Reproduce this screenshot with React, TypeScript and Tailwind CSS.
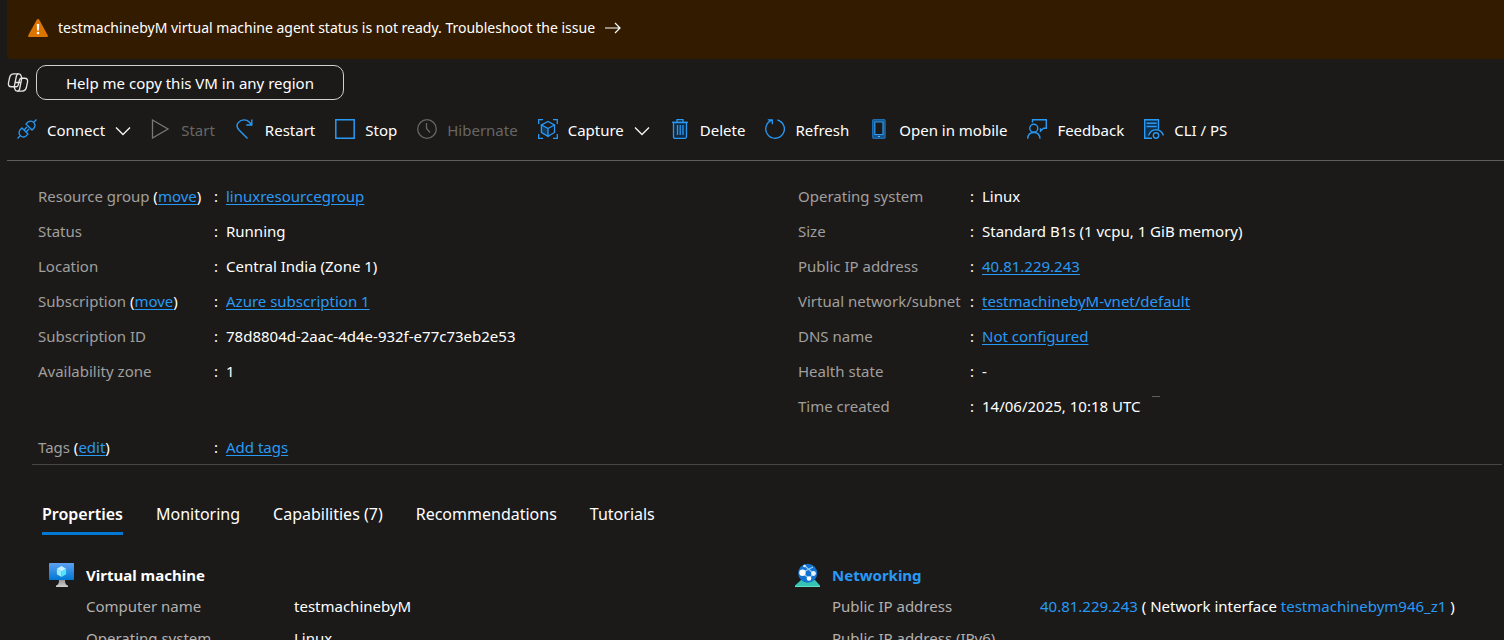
import type { ReactNode } from "react";

const svg = "size-5 shrink-0 fill-none stroke-[#2899f5]";

const ConnectIcon = () => (
  <svg viewBox="0 0 20 20" className={`${svg} -translate-y-px`} strokeWidth="1.3">
    <path d="M.5 19.500 3.500 16.500M16.500 3.500 19.500.5" />
    <path d="M5 9 11 15 9 17C7.200 18.400 5 18.200 3.400 16.600 1.800 15 1.700 13 3 11Z" />
    <path d="M9 5 15 11 17 9C18.300 7.200 18.200 5 16.600 3.400 15 1.800 13 1.700 11 3Z" />
    <path d="M7 11 10 8M9 13 12 10" />
  </svg>
);
const StartIcon = () => (
  <svg viewBox="0 0 20 20" className="size-5 shrink-0 -translate-y-px fill-none stroke-[#797775]" strokeWidth="1.3">
    <path d="M1.500 1 17 10 1.500 19Z" />
  </svg>
);
const RestartIcon = () => (
  <svg viewBox="0 0 20 20" className={`${svg} -translate-y-px`} strokeWidth="1.4">
    <path d="M12.500 19.500 3.800 10.800C1.800 8.500 1.700 5.300 3.700 3.100 6.500.1 11.500.1 14.200 3L16.500 5.700M16.800.5V6H11.300" />
  </svg>
);
const StopIcon = () => (
  <svg viewBox="0 0 20 20" className={`${svg} -translate-y-px`} strokeWidth="1.5">
    <path d="M.8.8H19.200V19.200H.8Z" />
  </svg>
);
const HibernateIcon = () => (
  <svg viewBox="0 0 20 20" className="size-5 shrink-0 -translate-y-px fill-none stroke-[#686664]" strokeWidth="1.3">
    <circle cx="10" cy="10" r="9.300" />
    <path d="M9.500 4V9.500L13 13.500" />
  </svg>
);
const CaptureIcon = () => (
  <svg viewBox="0 0 20 20" className={`${svg} -translate-y-px`} strokeWidth="1.3">
    <path d="M.7 5V.7H5M15 .7H19.300V5M19.300 15V19.300H15M5 19.300H.7V15" />
    <path d="M10 2.500 16.500 6V13.500L10 17.300 3.500 13.500V6Z" />
    <path d="M3.500 6 10 9.500V17.300L3.500 13.500Z" fill="#123a5a" />
    <path d="M10 9.500 16.500 6" />
  </svg>
);
const DeleteIcon = () => (
  <svg viewBox="0 0 20 20" className={`${svg} -translate-y-px`} strokeWidth="1.3">
    <path d="M3.200 3.500H16.500V17.800Q16.500 19.300 15 19.300H5Q3.500 19.300 3.500 17.800V3.500" fill="#102c44" />
    <path d="M2 3.300H18M7 3V.7H13V3M7.500 6V16M10.200 6V16M13 6V16" />
  </svg>
);
const RefreshIcon = () => (
  <svg viewBox="0 0 20 20" className={`${svg} -translate-y-px`} strokeWidth="1.3">
    <path d="M12.500 1A9.300 9.300 0 1 1 7 1.200M2.800.8H7.300V5.300" />
  </svg>
);
const MobileIcon = () => (
  <svg viewBox="0 0 20 20" className={`${svg} -translate-y-px`} strokeWidth="1.2">
    <rect x="3.600" y=".7" width="12.500" height="18.600" rx="1" fill="#1b5285" stroke="#1f6cae" />
    <path d="M5.800 3H14V15.500H5.800Z" fill="#1b1a19" />
    <path d="M9 17.500H11" stroke="#5bb8ff" />
  </svg>
);
const FeedbackIcon = () => (
  <svg viewBox="0 0 20 20" className={`${svg} -translate-y-px`} strokeWidth="1.4">
    <path d="M5.500 3.500V.7H19.300V9.300H16.500L13.500 12.200V9.300" />
    <circle cx="6.800" cy="9.300" r="4" />
    <path d="M.7 19.800C.8 15.800 3.200 13.500 6.800 13.500S12.800 15.800 13 19.800" />
  </svg>
);
const CliIcon = () => (
  <svg viewBox="0 0 20 20" className={`${svg} -translate-y-px`} strokeWidth="1.4">
    <path d="M.7.7H14.500V10.500C9 10.800 6 13 5 17L6 19.300H.7Z" fill="#0f3250" stroke="none" />
    <path d="M8 19.300H.7V.7H14.500V10M2.500 4.300H12.700M2.500 7.500H12.700" />
    <path d="M4.500 16.500C6 12.700 8.800 10.800 12 10.800S18 12.700 19.500 16.500" />
    <circle cx="12" cy="16.500" r="2.700" />
  </svg>
);
const Chevron = () => (
  <svg viewBox="0 0 16 10" className="h-[10px] w-4 shrink-0 translate-y-px fill-none stroke-[#f3f2f1]" strokeWidth="1.4">
    <path d="M1 1.500 8 8.500 15 1.500" />
  </svg>
);
const WarningIcon = () => (
  <svg viewBox="0 0 20 18" className="h-[18px] w-5 shrink-0">
    <path d="M10 0Q10.900 0 11.400.9L19.700 16.200Q20.500 17.900 18.700 18H1.300Q-.5 17.900.3 16.200L8.600.9Q9.100 0 10 0Z" fill="#db7500" />
    <path d="M8.800 5H11.200L10.900 11.500H9.100Z" fill="#fff" />
    <circle cx="10" cy="14" r="1.300" fill="#fff" />
  </svg>
);
const CopilotIcon = () => (
  <svg viewBox="0 0 22 20" className="h-[19px] w-[22px] shrink-0 fill-none stroke-[#e8e6e4]" strokeWidth="1.400" strokeLinejoin="round">
    <path d="M7 14.500H4C1.500 14.500 .5 13 1 10.500L2.200 4.700C2.800 2.300 4 1 6.500 1H12C13.500 1 14.100 1.800 14.400 3.200L14.900 5.500" />
    <path d="M15 5.500H18C20.500 5.500 21.500 7 21 9.500L19.800 15.300C19.200 17.700 18 19 15.500 19H10C8.500 19 7.900 18.200 7.600 16.800L7.100 14.500" />
    <path d="M11.500 1C10.200 1 9.700 1.800 9.300 3.200L7 14.500H9.300C10.500 14.500 11 13.800 11.300 12.500L12.500 7.500C12.900 6 13.500 5.500 15 5.500L12.700 16.800C12.300 18.200 11.800 19 10.500 19" />
    <path d="M8 10H12M10.200 10H14" />
  </svg>
);
const VmIcon = () => (
  <svg viewBox="0 0 26 24" className="h-6 w-[26px] shrink-0">
    <defs>
      <linearGradient id="screen" x1="0" y1="0" x2="0" y2="1">
        <stop offset="0" stopColor="#5ea0ef" />
        <stop offset="1" stopColor="#0078d4" />
      </linearGradient>
      <linearGradient id="stand" x1="0" y1="0" x2="0" y2="1">
        <stop offset="0" stopColor="#8f8f8f" />
        <stop offset="1" stopColor="#d0d0d0" />
      </linearGradient>
    </defs>
    <path d="M10 16H16C16 20 16.500 22 19 22.500V24H7V22.500C9.500 22 10 20 10 16Z" fill="url(#stand)" />
    <rect width="25" height="17" rx=".8" fill="url(#screen)" />
    <path d="M12.500 3 17.100 5.700 12.500 8.400 7.900 5.700Z" fill="#c3f1ff" />
    <path d="M7.900 5.700 12.500 8.400V14L7.900 11.300Z" fill="#9cebff" />
    <path d="M17.100 5.700V11.300L12.500 14V8.400Z" fill="#50e6ff" />
  </svg>
);
const NetworkIcon = () => (
  <svg viewBox="0 0 26 24" className="h-6 w-[26px] shrink-0">
    <path d="M6 17H20L25 22.500V24H0V22.500Z" fill="#37c2b1" />
    <path d="M0 23H25V24H0Z" fill="#5ee0cf" />
    <circle cx="12.700" cy="10.300" r="9.500" fill="#1173d0" />
    <path d="M9.500 2.700 18.500 10.500M7.500 9.500 18 4M7.500 10 14 15.500 18.500 10.500" stroke="#9fcdf5" strokeWidth="1.100" fill="none" />
    <circle cx="7.500" cy="9.700" r="3.200" fill="#fff" />
    <circle cx="18.500" cy="10.500" r="2.400" fill="#eaf5ff" />
    <circle cx="14" cy="15.500" r="2.300" fill="#fff" />
    <circle cx="9.500" cy="3" r="1.300" fill="#d6ebff" />
  </svg>
);

const commands: { label: string; icon: ReactNode; menu?: boolean; disabled?: boolean }[] = [
  { label: "Connect", icon: <ConnectIcon />, menu: true },
  { label: "Start", icon: <StartIcon />, disabled: true },
  { label: "Restart", icon: <RestartIcon /> },
  { label: "Stop", icon: <StopIcon /> },
  { label: "Hibernate", icon: <HibernateIcon />, disabled: true },
  { label: "Capture", icon: <CaptureIcon />, menu: true },
  { label: "Delete", icon: <DeleteIcon /> },
  { label: "Refresh", icon: <RefreshIcon /> },
  { label: "Open in mobile", icon: <MobileIcon /> },
  { label: "Feedback", icon: <FeedbackIcon /> },
  { label: "CLI / PS", icon: <CliIcon /> },
];

const Link = ({ children }: { children: ReactNode }) => (
  <a href="#" className="text-[#2899f5] underline underline-offset-2">{children}</a>
);

type Row = { label: string; action?: string; value: string; link?: boolean };

const left: Row[] = [
  { label: "Resource group", action: "move", value: "linuxresourcegroup", link: true },
  { label: "Status", value: "Running" },
  { label: "Location", value: "Central India (Zone 1)" },
  { label: "Subscription", action: "move", value: "Azure subscription 1", link: true },
  { label: "Subscription ID", value: "78d8804d-2aac-4d4e-932f-e77c73eb2e53" },
  { label: "Availability zone", value: "1" },
];
const right: Row[] = [
  { label: "Operating system", value: "Linux" },
  { label: "Size", value: "Standard B1s (1 vcpu, 1 GiB memory)" },
  { label: "Public IP address", value: "40.81.229.243", link: true },
  { label: "Virtual network/subnet", value: "testmachinebyM-vnet/default", link: true },
  { label: "DNS name", value: "Not configured", link: true },
  { label: "Health state", value: "-" },
  { label: "Time created", value: "14/06/2025, 10:18 UTC" },
];

const Detail = ({ row, labelWidth, children }: { row: Row; labelWidth: string; children?: ReactNode }) => (
  <div className="flex h-[35px] items-center whitespace-nowrap">
    <dt className={`${labelWidth} shrink-0 text-[#a19f9d]`}>
      {row.label}
      {row.action && <span className="text-white"> (<Link>{row.action}</Link>)</span>}
    </dt>
    <dd className="flex">
      <span className="w-3">:</span>
      {row.link ? <Link>{row.value}</Link> : row.value}
      {children}
    </dd>
  </div>
);

const tabs = ["Properties", "Monitoring", "Capabilities (7)", "Recommendations", "Tutorials"];

const Property = ({ label, children }: { label: string; children?: ReactNode }) => (
  <div className="flex h-8 items-center whitespace-nowrap">
    <dt className="w-52 shrink-0 text-[#b3b0ad]">{label}</dt>
    <dd>{children}</dd>
  </div>
);

export default function App() {
  return (
    <div className="h-screen overflow-hidden bg-[#1b1a19] font-['Noto_Sans','Open_Sans',sans-serif] text-[15px] leading-5 text-white">
      <div role="status" className="ml-[7px] flex h-[59px] items-center rounded-bl-sm bg-[#331b00] pb-1 pl-[21px] text-sm">
        <a href="#" className="flex items-center gap-[10px] whitespace-nowrap">
          <WarningIcon />
          <span>testmachinebyM virtual machine agent status is not ready. Troubleshoot the issue</span>
          <svg viewBox="0 0 16 12" className="h-3 w-4 fill-none stroke-white" strokeWidth="1.200">
            <path d="M0 6H15M10 1 15 6 10 11" />
          </svg>
        </a>
      </div>

      <div className="flex items-center gap-[7px] pt-[6px] pl-[7px]">
        <CopilotIcon />
        <button className="h-[35px] rounded-[10px] border border-[#d2d0ce] px-[29px]">
          Help me copy this VM in any region
        </button>
      </div>

      <div role="toolbar" aria-label="Virtual machine commands" className="ml-[7px] flex h-[61px] items-center gap-5 border-b border-[#605e5c] pl-[10px]">
        {commands.map((c) => (
          <button
            key={c.label}
            disabled={c.disabled}
            className="flex items-center gap-[10px] whitespace-nowrap disabled:text-[#686664]"
          >
            {c.icon}
            <span>{c.label}</span>
            {c.menu && <Chevron />}
          </button>
        ))}
      </div>

      <section aria-label="Essentials" className="mr-[2px] ml-8 border-b border-[#484644] pt-[17px] pl-[6px]">
        <div className="grid grid-cols-[760fr_704fr]">
          <dl>
            {left.map((r) => <Detail key={r.label} row={r} labelWidth="w-44" />)}
          </dl>
          <dl>
            {right.map((r, i) => (
              <Detail key={r.label} row={r} labelWidth="w-[172px]">
                {i === right.length - 1 && <span aria-hidden="true" className="ml-3 h-px w-2 bg-[#605e5c]" />}
              </Detail>
            ))}
          </dl>
        </div>
        <dl className="pt-[6px]">
          <Detail row={{ label: "Tags", action: "edit", value: "Add tags", link: true }} labelWidth="w-44" />
        </dl>
      </section>

      <div role="tablist" className="flex gap-[33px] pt-[37px] pl-[42px] text-base leading-6">
        {tabs.map((t, i) => (
          <button
            key={t}
            role="tab"
            aria-selected={i === 0}
            className="h-[33px] border-b-[3px] border-transparent pb-[6px] whitespace-nowrap aria-selected:border-[#0078d4] aria-selected:font-semibold"
          >
            {t}
          </button>
        ))}
      </div>

      <div className="grid grid-cols-[746fr_709fr] pt-7 pl-[49px]">
        <section className="flex gap-[11px]">
          <VmIcon />
          <div>
            <h2 className="flex h-[27px] items-center pb-[3px] font-bold">Virtual machine</h2>
            <dl>
              <Property label="Computer name">testmachinebyM</Property>
              <Property label="Operating system">Linux</Property>
            </dl>
          </div>
        </section>
        <section className="flex gap-[11px]">
          <NetworkIcon />
          <div>
            <h2 className="flex h-[27px] items-center pb-[3px] font-bold">
              <a href="#" className="text-[#2899f5]">Networking</a>
            </h2>
            <dl>
              <Property label="Public IP address">
                <a href="#" className="text-[#2899f5]">40.81.229.243</a> ( Network interface{" "}
                <a href="#" className="text-[#2899f5]">testmachinebym946_z1</a> )
              </Property>
              <Property label="Public IP address (IPv6)" />
            </dl>
          </div>
        </section>
      </div>
    </div>
  );
}
